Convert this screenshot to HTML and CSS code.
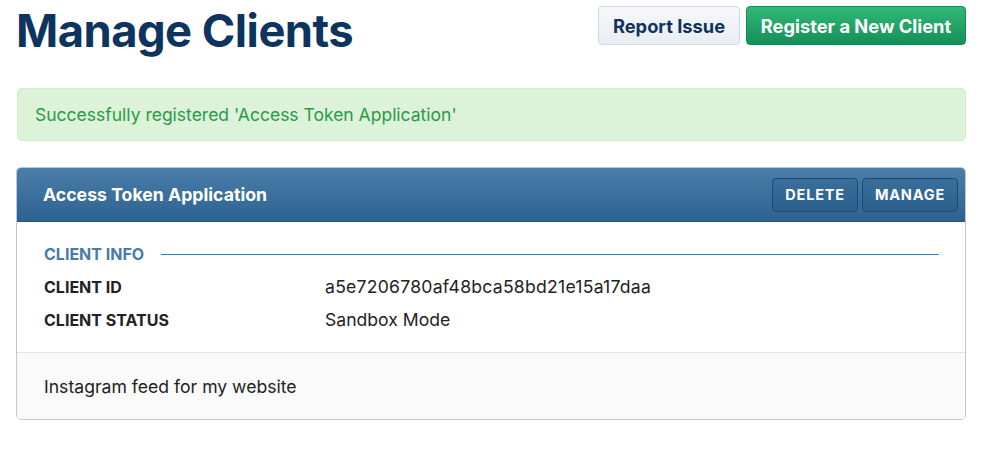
FILE: index.html
```html
<!DOCTYPE html>
<html>
<head>
<meta charset="utf-8">
<link rel="stylesheet" href="styles.css">
</head>
<body>
<div class="page">
  <header class="top">
    <h1 class="title">Manage Clients</h1>
    <div class="actions">
      <button class="btn btn-light">Report Issue</button>
      <button class="btn btn-green">Register a New Client</button>
    </div>
  </header>
  <div class="alert">Successfully registered 'Access Token Application'</div>
  <section class="panel">
    <div class="panel-head">
      <h2 class="panel-title">Access Token Application</h2>
      <div class="panel-actions">
        <button class="pbtn">DELETE</button>
        <button class="pbtn">MANAGE</button>
      </div>
    </div>
    <div class="panel-body">
      <div class="section-label"><span>CLIENT INFO</span><span class="rule"></span></div>
      <div class="row"><span class="key">CLIENT ID</span><span class="val val-id">a5e7206780af48bca58bd21e15a17daa</span></div>
      <div class="row"><span class="key">CLIENT STATUS</span><span class="val">Sandbox Mode</span></div>
    </div>
    <div class="panel-foot">Instagram feed for my website</div>
  </section>
</div>
</body>
</html>
```
FILE: styles.css
```css
* { box-sizing: border-box; }
body {
  margin: 0;
  font-family: Inter, "Liberation Sans", sans-serif;
  color: #222;
  background: #fff;
}
.page {
  padding: 4px 36px 0 16px;
}
.top {
  display: flex;
  justify-content: space-between;
  align-items: flex-start;
}
.title {
  margin: 0;
  font-size: 45.3px;
  font-weight: 700;
  line-height: 54px;
  color: #0d345e;
  letter-spacing: -0.5px;
}
.actions {
  display: flex;
  gap: 6px;
  margin-top: 2px;
}
.btn {
  font-family: inherit;
  font-size: 18.3px;
  font-weight: 700;
  height: 39px;
  padding: 0;
  border-radius: 4px;
  cursor: pointer;
}
.btn-light {
  background: linear-gradient(#f6f8fa, #e9edf1);
  border: 1px solid #cdd9e5;
  color: #0d345e;
  width: 142px;
}
.btn-green {
  background: linear-gradient(#33b875, #13905a);
  border: 1px solid #178a52;
  color: #fff;
  width: 220px;
}
.alert {
  margin-top: 30px;
  margin-left: 1px;
  height: 53px;
  background: #dcf2d9;
  border: 1px solid #cfeccb;
  border-radius: 5px;
  color: #2a9a48;
  font-size: 17.5px;
  display: flex;
  align-items: center;
  padding-left: 17px;
}
.panel {
  margin-top: 26px;
  border: 1px solid #b9c9d8;
  border-radius: 5px;
  overflow: hidden;
}
.panel-head {
  height: 54px;
  background: linear-gradient(#4b7fa9, #2d6190);
  border-bottom: 1px solid #24557f;
  display: flex;
  align-items: center;
  justify-content: space-between;
  padding: 0 7px 0 26px;
}
.panel-title {
  margin: 0;
  font-size: 17.7px;
  font-weight: 700;
  color: #fff;
}
.panel-actions {
  display: flex;
  gap: 4px;
}
.pbtn {
  font-family: inherit;
  height: 34px;
  background: linear-gradient(#3a6f9c, #2b5f8c);
  border: 1px solid #1c4a74;
  border-radius: 4px;
  color: #fff;
  font-size: 14.5px;
  font-weight: 700;
  letter-spacing: 0.8px;
  padding: 0 12px;
}
.panel-body {
  padding: 20px 26px 16px 27px;
  background: #fff;
}
.section-label {
  display: flex;
  align-items: center;
  gap: 17px;
  color: #4a7ba8;
  font-size: 16px;
  font-weight: 700;
  height: 24px;
  margin-bottom: 4px;
}
.rule {
  flex: 1;
  height: 1px;
  background: #4a7ba8;
}
.row {
  display: flex;
  align-items: center;
  height: 33px;
}
.key {
  width: 281px;
  font-size: 16px;
  font-weight: 700;
  color: #222;
}
.val {
  font-size: 17.6px;
  color: #222;
}
.val-id {
  letter-spacing: 0.25px;
}
.panel-foot {
  border-top: 1px solid #dde3e9;
  background: #fafafa;
  height: 67px;
  display: flex;
  align-items: center;
  padding-left: 27px;
  font-size: 17.6px;
  color: #222;
}
```
